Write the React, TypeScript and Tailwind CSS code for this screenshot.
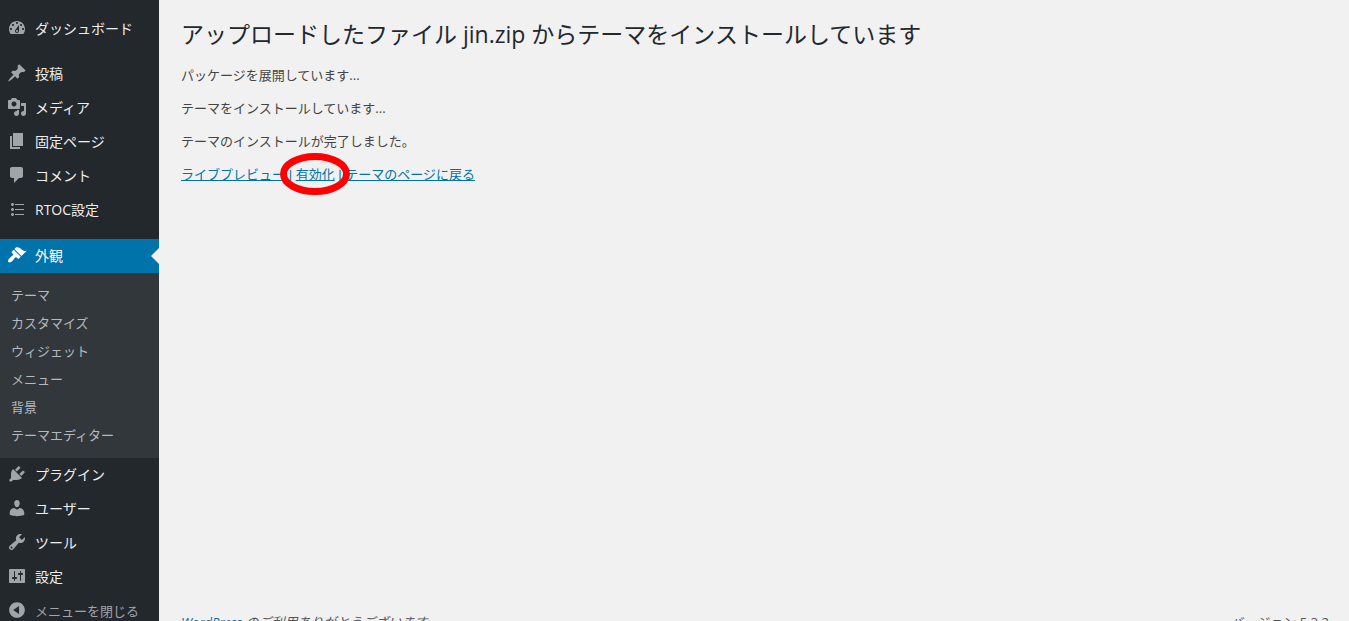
import React from "react";

type MenuEntry = {
  label: string;
  path: string;
};

const firstItems: MenuEntry[] = [
  {
    label: "投稿",
    path: "M10.44 3.02l1.82-1.82 6.36 6.35-1.83 1.82c-1.05-.68-2.48-.57-3.41.36l-.75.75c-.92.93-1.04 2.35-.35 3.41l-1.83 1.82-2.41-2.41-2.8 2.79c-.42.42-3.38 2.71-3.8 2.29s1.86-3.39 2.28-3.81l2.79-2.79L4.1 9.36l1.83-1.82c1.05.69 2.48.57 3.4-.36l.75-.75c.93-.92 1.05-2.35.36-3.41z",
  },
  {
    label: "メディア",
    path: "M13 11V4c0-.55-.45-1-1-1h-1.67L9 1H5L3.67 3H2c-.55 0-1 .45-1 1v7c0 .55.45 1 1 1h10c.55 0 1-.45 1-1zM7 4.5c1.38 0 2.5 1.12 2.5 2.5S8.38 9.5 7 9.5 4.5 8.38 4.5 7 5.62 4.5 7 4.5zM14 6h5v10.5c0 1.38-1.12 2.5-2.5 2.5S14 17.88 14 16.5s1.12-2.5 2.5-2.5c.17 0 .34.02.5.05V9h-3V6zm-4 8.05V13h2v3.5c0 1.38-1.12 2.5-2.5 2.5S7 17.88 7 16.5 8.12 14 9.5 14c.17 0 .34.02.5.05z",
  },
  {
    label: "固定ページ",
    path: "M6 15V2h10v13H6zm-1 1h8v2H3V5h2v11z",
  },
  {
    label: "コメント",
    path: "M5 2h9c1.1 0 2 .9 2 2v7c0 1.1-.9 2-2 2h-2l-5 5v-5H5c-1.1 0-2-.9-2-2V4c0-1.1.9-2 2-2z",
  },
  {
    label: "RTOC設定",
    path: "M5.5 7C4.67 7 4 6.33 4 5.5 4 4.68 4.67 4 5.5 4 6.32 4 7 4.68 7 5.5 7 6.33 6.32 7 5.5 7zM8 5h9v1H8V5zm-2.5 7c-.83 0-1.5-.67-1.5-1.5C4 9.68 4.67 9 5.5 9c.82 0 1.5.68 1.5 1.5 0 .83-.68 1.5-1.5 1.5zM8 10h9v1H8v-1zm-2.5 7c-.83 0-1.5-.67-1.5-1.5 0-.82.67-1.5 1.5-1.5.82 0 1.5.68 1.5 1.5 0 .83-.68 1.5-1.5 1.5zM8 15h9v1H8v-1z",
  },
];

const lastItems: MenuEntry[] = [
  {
    label: "プラグイン",
    path: "M13.11 4.36L9.87 7.6 8 5.73l3.24-3.24c.35-.34 1.05-.2 1.56.32.52.51.66 1.21.31 1.55zm-8 1.77l.91-1.12 9.01 9.01-1.19.84c-.71.71-2.63 1.16-3.82 1.16H6.14L4.9 17.26c-.59.59-1.54.59-2.12 0-.59-.58-.59-1.53 0-2.12l1.24-1.24v-3.88c0-1.13.4-3.19 1.09-3.89zm7.26 3.97l3.24-3.24c.34-.35 1.04-.21 1.55.31.52.51.66 1.21.31 1.55l-3.24 3.25z",
  },
  {
    label: "ユーザー",
    path: "M10 9.25c-2.27 0-2.73-3.44-2.73-3.44C7 4.02 7.82 2 9.97 2c2.16 0 2.98 2.02 2.71 3.81 0 0-.41 3.44-2.68 3.44zm0 2.57L12.72 10c2.39 0 4.52 2.33 4.52 4.53v2.49s-3.65 1.13-7.24 1.13c-3.65 0-7.24-1.13-7.24-1.13v-2.49c0-2.25 1.94-4.48 4.47-4.48z",
  },
  {
    label: "ツール",
    path: "M16.68 9.77c-1.34 1.34-3.3 1.67-4.95.99l-5.41 6.52c-.99.99-2.59.99-3.58 0s-.99-2.59 0-3.57l6.52-5.42c-.68-1.65-.35-3.61.99-4.95 1.28-1.28 3.12-1.62 4.72-1.06l-2.89 2.89 2.82 2.82 2.86-2.87c.53 1.58.18 3.39-1.08 4.65zM3.81 16.21c.4.39 1.04.39 1.43 0 .4-.4.4-1.04 0-1.43-.39-.4-1.03-.4-1.43 0-.39.39-.39 1.03 0 1.43z",
  },
  {
    label: "設定",
    path: "M18 16V4c0-.55-.45-1-1-1H3c-.55 0-1 .45-1 1v12c0 .55.45 1 1 1h14c.55 0 1-.45 1-1zM8 11h1c.55 0 1 .45 1 1s-.45 1-1 1H8v1.5c0 .28-.22.5-.5.5s-.5-.22-.5-.5V13H6c-.55 0-1-.45-1-1s.45-1 1-1h1V5.5c0-.28.22-.5.5-.5s.5.22.5.5V11zm5-2h-1c-.55 0-1-.45-1-1s.45-1 1-1h1V5.5c0-.28.22-.5.5-.5s.5.22.5.5V7h1c.55 0 1 .45 1 1s-.45 1-1 1h-1v5.5c0 .28-.22.5-.5.5s-.5-.22-.5-.5V9z",
  },
];

const dashboardPath =
  "M3.76 16h12.48c1.1-1.37 1.76-3.11 1.76-5 0-4.42-3.58-8-8-8s-8 3.58-8 8c0 1.89.66 3.63 1.76 5zM10 4c.55 0 1 .45 1 1s-.45 1-1 1-1-.45-1-1 .45-1 1-1zM6 6c.55 0 1 .45 1 1s-.45 1-1 1-1-.45-1-1 .45-1 1-1zm8 0c.55 0 1 .45 1 1s-.45 1-1 1-1-.45-1-1 .45-1 1-1zm-5.37 5.55L12 7v6c0 1.1-.9 2-2 2s-2-.9-2-2c0-.57.24-1.08.63-1.45zM4 10c.55 0 1 .45 1 1s-.45 1-1 1-1-.45-1-1 .45-1 1-1zm12 0c.55 0 1 .45 1 1s-.45 1-1 1-1-.45-1-1 .45-1 1-1zm-5 3c0-.55-.45-1-1-1s-1 .45-1 1 .45 1 1 1 1-.45 1-1z";

const appearancePath =
  "M14.48 11.06L7.41 3.99l1.5-1.5c.5-.56 2.3-.47 3.51.32 1.21.8 1.43 1.28 2.91 2.1 1.18.64 2.45 1.26 4.45.85zm-.71.71L6.7 4.7 4.93 6.47c-.39.39-.39 1.02 0 1.41l1.06 1.06c.39.39.39 1.03 0 1.42-.6.6-1.43 1.11-2.21 1.69-.35.26-.7.53-1.01.84C1.43 14.23.4 16.08 1.4 17.07c.99 1 2.84-.03 4.18-1.36.31-.31.58-.66.85-1.02.57-.78 1.08-1.61 1.69-2.21.39-.39 1.02-.39 1.41 0l1.06 1.06c.39.39 1.02.39 1.41 0z";

const collapsePath =
  "M10 2.16c4.33 0 7.84 3.51 7.84 7.84s-3.51 7.84-7.84 7.84S2.16 14.33 2.16 10 5.71 2.16 10 2.16zm2 11.72V6.12L6.18 9.97z";

const submenu = ["テーマ", "カスタマイズ", "ウィジェット", "メニュー", "背景", "テーマエディター"];

function Icon({ path }: { path: string }) {
  return (
    <svg className="mb-0.5 h-5 w-5 shrink-0" viewBox="0 0 20 20" fill="currentColor" fillRule="evenodd" aria-hidden="true">
      <path d={path} />
    </svg>
  );
}

function MenuItem({ label, path }: MenuEntry) {
  return (
    <li>
      <a href="#" className="flex h-[34px] items-center gap-2 pl-[7px] text-[#a0a5aa]">
        <Icon path={path} />
        <span className="text-[#eee]">{label}</span>
      </a>
    </li>
  );
}

function Sidebar() {
  return (
    <nav className="w-[159px] shrink-0 bg-[#23282d] py-3 text-sm leading-5">
      <ul>
        <MenuItem label="ダッシュボード" path={dashboardPath} />
      </ul>
      <ul className="mt-[11px]">
        {firstItems.map((item) => (
          <MenuItem key={item.label} {...item} />
        ))}
      </ul>
      <ul className="mt-3">
        <li>
          <a href="#" className="relative flex h-[34px] items-center gap-2 bg-[#0073aa] pl-[7px] text-white">
            <Icon path={appearancePath} />
            <span>外観</span>
            {/* arrow pointing at the current page */}
            <span className="absolute top-1/2 right-0 -translate-y-1/2 border-8 border-l-0 border-transparent border-r-[#f1f1f1]" />
          </a>
          <ul className="bg-[#32373c] pt-2 pb-[9px] text-[13px] text-[#b4b9be]">
            {submenu.map((label) => (
              <li key={label}>
                <a href="#" className="flex h-7 items-center pl-[11px]">
                  {label}
                </a>
              </li>
            ))}
          </ul>
        </li>
        {lastItems.map((item) => (
          <MenuItem key={item.label} {...item} />
        ))}
        <li>
          <button type="button" className="flex h-[34px] w-full items-center gap-2 pl-[7px] text-[13px] text-[#a0a5aa]">
            <Icon path={collapsePath} />
            <span>メニューを閉じる</span>
          </button>
        </li>
      </ul>
    </nav>
  );
}

function Separator() {
  return <span className="font-['Liberation_Sans',sans-serif]"> | </span>;
}

export default function App() {
  return (
    <div className="h-screen overflow-hidden bg-[#f1f1f1] font-['Open_Sans','Noto_Sans_CJK_JP',sans-serif] text-[13px] leading-5 text-[#444]">
      <div className="flex min-h-full">
        <Sidebar />
        <div className="flex min-w-0 flex-1 flex-col pr-5 pl-[22px]">
          <main className="pt-[18px]">
            <h1 className="text-[23px] leading-8 text-[#23282d]">
              アップロードしたファイル jin.zip からテーマをインストールしています
            </h1>
            <div className="mt-[15px] flex flex-col gap-[13px]">
              <p>パッケージを展開しています...</p>
              <p>テーマをインストールしています...</p>
              <p>テーマのインストールが完了しました。</p>
              <p className="text-[#0073aa]">
                <a href="#" className="underline">ライブプレビュー</a>
                <Separator />
                <span className="relative inline-block">
                  <a href="#" className="underline">有効化</a>
                  {/* hand-drawn style highlight */}
                  <svg
                    className="pointer-events-none absolute top-1/2 left-1/2 h-[42px] w-[70px] max-w-none -translate-x-1/2 -translate-y-1/2"
                    viewBox="0 0 70 42"
                    fill="none"
                    aria-hidden="true"
                  >
                    <ellipse cx="35" cy="21" rx="31.5" ry="17.5" stroke="#ff0000" strokeWidth="7" />
                  </svg>
                </span>
                <Separator />
                <a href="#" className="underline">テーマのページに戻る</a>
              </p>
            </div>
          </main>
          <footer className="mt-auto flex justify-between pb-2 text-[#555]">
            <p className="italic">
              <a href="#" className="text-[#0073aa]">WordPress</a> のご利用ありがとうございます。
            </p>
            <p>バージョン 5.3.2</p>
          </footer>
        </div>
      </div>
    </div>
  );
}
